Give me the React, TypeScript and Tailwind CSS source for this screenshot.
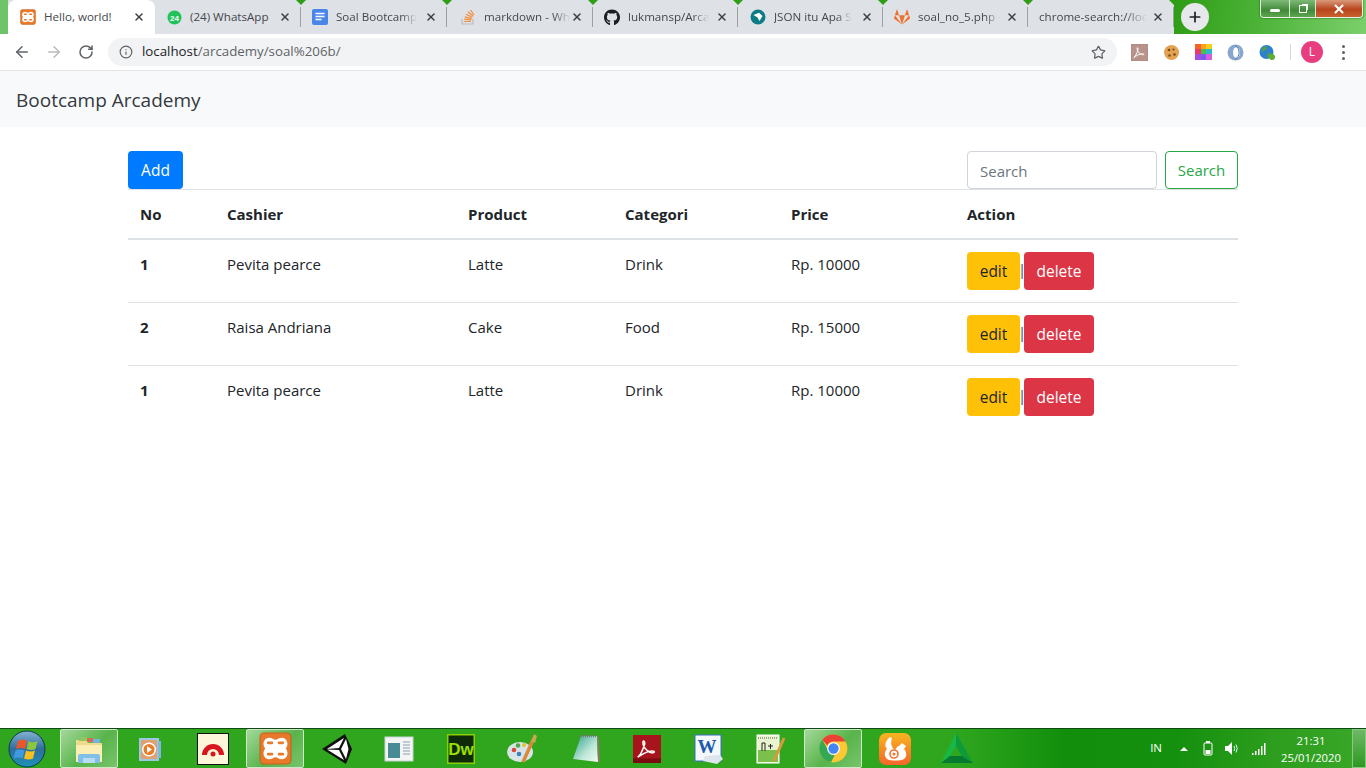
import React from "react";
import { ArrowLeft, ArrowRight, RotateCw, Info, Star, X, Plus } from "lucide-react";
import { FaGithub, FaGitlab } from "react-icons/fa";

const Xampp = ({ s = 16 }: { s?: number }) => (
  <svg width={s} height={s} viewBox="0 0 32 32">
    <rect x="1" y="1" width="30" height="30" rx="4" fill="#e8782a" stroke="#c9601c" />
    <path d="M10 5.500c-5 0-7.500 6-4 10.500-3.500 4.500-1 10.500 4 10.500 3 0 4-2 6-2s3 2 6 2c5 0 7.500-6 4-10.500 3.500-4.500 1-10.500-4-10.500-3 0-4 2-6 2s-3-2-6-2z" fill="#fff" />
    <path d="M9 10.500h3.500M9 21.500h3.500M19.500 10.500H23M19.500 21.500H23" stroke="#e8782a" strokeWidth="2.800" strokeLinecap="round" />
  </svg>
);
const Whats = () => (
  <svg width="15" height="15" viewBox="0 0 15 15"><circle cx="7.500" cy="7.500" r="7" fill="#22c25a" /><text x="7.500" y="10.500" textAnchor="middle" fontSize="8" fontWeight="700" fill="#fff" fontFamily="Liberation Sans">24</text></svg>
);
const Docs = () => (
  <svg width="16" height="16" viewBox="0 0 16 16"><rect width="16" height="16" rx="2" fill="#4a86e8" /><path d="M3.500 4.500h9M3.500 7.500h9M3.500 10.500h6" stroke="#fff" strokeWidth="1.500" /></svg>
);
const Stack = () => (
  <svg width="14" height="16" viewBox="0 0 14 16"><path d="M1 10v5h11v-5" fill="none" stroke="#bbb" strokeWidth="1.200" /><path d="M3 12.500h7M3.200 10.200l7 .7M3.800 7.800l6.800 1.800M5 5.200l6.200 3M7 2.800l5.200 4.400M9.600 1l3.400 5" stroke="#f28c38" strokeWidth="1.200" fill="none" /></svg>
);
const JsonI = () => (
  <svg width="16" height="16" viewBox="0 0 16 16"><circle cx="8" cy="8" r="7.500" fill="#0e7c86" /><path d="M3.500 6 9 3.800 12.500 7 9.500 12 7.500 8.500z" fill="#fff" /></svg>
);
const Acro = ({ c = "#fff" }: { c?: string }) => (
  <path d="M4 19c2-1 4-5 6-11 .5-2-1-4-1.500-2-.5 3 3 8 6.500 9 2 .5 4 0 3-1-1.500-1-7 0-14 5z" fill="none" stroke={c} strokeWidth="1.300" />
);

const tabs = [
  { t: "Hello, world!", i: <Xampp />, w: 147, active: true, left: 12, nofade: true },
  { t: "(24) WhatsApp", i: <Whats />, w: 146, left: 11, nofade: true },
  { t: "Soal Bootcamp", i: <Docs />, w: 146, left: 11 },
  { t: "markdown - Wh", i: <Stack />, w: 146, left: 13 },
  { t: "lukmansp/Arca", i: <FaGithub size={17} color="#1b1f23" />, w: 145, left: 11 },
  { t: "JSON itu Apa S", i: <JsonI />, w: 145, left: 12 },
  { t: "soal_no_5.php ·", i: <FaGitlab size={16} color="#f0702c" />, w: 145, left: 11 },
  { t: "chrome-search://loc", i: null, w: 146, left: 11 },
];

function Tab({ t, i, w, active, left, nofade }: any) {
  return (
    <div style={{ width: w, paddingLeft: left }} className={`relative flex h-full shrink-0 items-center ${active ? "rounded-t-lg bg-white" : ""}`}>
      {i && <span className="mr-2 flex w-4 shrink-0 items-center justify-center">{i}</span>}
      <span className={`whitespace-nowrap text-[11.6px] text-[#45484c] ${nofade ? "" : "[mask-image:linear-gradient(90deg,#000_80%,transparent)]"}`}>{t}</span>
      <X className="absolute right-[10px] top-[11px] text-[#3c4043]" size={12} strokeWidth={3} />
      {!active && <span className="absolute right-0 top-[7px] h-5 w-px bg-[#9aa0a6]" />}
      {!active && <span className="absolute -right-[5px] top-0 h-0 w-0 border-x-[5px] border-t-[5px] border-x-transparent border-t-[#2f9e14]" />}
    </div>
  );
}

function TitleBar() {
  return (
    <div className="relative flex h-[34px] shrink-0 bg-[linear-gradient(100deg,#2c9a12_85%,#4cb338_92%,#7ccf6c_100%)]">
      <div className="w-2 bg-[#6fc46a]" />
      <div className="flex h-full bg-[#dee1e6]">
        {tabs.map((x) => <Tab key={x.t} {...x} />)}
      </div>
      <div className="ml-[7px] mt-[3px] flex h-7 w-7 items-center justify-center rounded-full bg-[#e6e8eb] text-[#202124]"><Plus size={16} strokeWidth={2.600} /></div>
      <div className="absolute right-[3px] top-0 flex h-[18px] w-[103px] overflow-hidden rounded-b border border-t-0 border-[#e8f2e4] shadow-[0_0_2px_#16500c]">
        <div className="flex w-[28px] items-center justify-center bg-[linear-gradient(#7eb978,#3f8a37_60%,#5fa652)]"><span className="mt-1 h-[3px] w-[10px] rounded-sm bg-white" /></div>
        <div className="flex w-[27px] items-center justify-center border-x border-[#dbe9d6] bg-[linear-gradient(#7eb978,#3f8a37_60%,#5fa652)]"><span className="h-2 w-2 border border-white shadow-[2px_-2px_0_-1px_#fff]" /></div>
        <div className="flex flex-1 items-center justify-center bg-[linear-gradient(#d99a7c,#b9441c_55%,#c7622f)] text-white"><X size={14} strokeWidth={3.500} /></div>
      </div>
    </div>
  );
}

function Toolbar() {
  return (
    <div className="flex h-[37px] shrink-0 items-center border-b border-[#e3e4e6] bg-white pl-[13px]">
      <ArrowLeft size={18} strokeWidth={2} className="text-[#5f6368]" />
      <ArrowRight size={18} strokeWidth={2} className="ml-[14px] text-[#b8babd]" />
      <RotateCw size={16} strokeWidth={2.300} className="ml-[15px] text-[#5f6368]" />
      <div className="ml-[14px] flex h-[28px] w-[1009px] items-center rounded-full bg-[#f1f3f4] pl-[11px] pr-[11px] text-[13.3px]">
        <Info size={14} strokeWidth={2} className="text-[#5f6368]" />
        <span className="ml-[9px] text-[#202124]">localhost</span>
        <span className="text-[#5f6368]">/arcademy/soal%206b/</span>
        <Star size={15} strokeWidth={2} className="ml-auto text-[#5f6368]" />
      </div>
      <div className="ml-[14px] flex items-center">
        <svg width="17" height="17" viewBox="0 0 24 24"><rect width="24" height="24" fill="#b8938c" stroke="#a3837c" /><Acro /></svg>
        <svg className="ml-[16px]" width="15" height="15" viewBox="0 0 15 15"><circle cx="7.500" cy="7.500" r="7.500" fill="#e2a252" /><circle cx="5" cy="5" r="1.300" fill="#7a4a1c" /><circle cx="9.500" cy="4.500" r="1.100" fill="#7a4a1c" /><circle cx="10.500" cy="9.500" r="1.300" fill="#7a4a1c" /><circle cx="5.500" cy="10.500" r="1.200" fill="#7a4a1c" /></svg>
        <svg className="ml-[16px]" width="17" height="16" viewBox="0 0 17 16">
          <rect width="6" height="5" fill="#f4632a" /><rect x="6" width="5" height="5" fill="#f7a21a" /><rect x="11" width="6" height="5" fill="#f6cf1e" />
          <rect y="5" width="6" height="5" fill="#e93a6a" /><rect x="6" y="5" width="5" height="5" fill="#45c04a" /><rect x="11" y="5" width="6" height="5" fill="#2fb8c8" />
          <rect y="10" width="6" height="6" fill="#a44ee0" /><rect x="6" y="10" width="5" height="6" fill="#7a58ee" /><rect x="11" y="10" width="6" height="6" fill="#d65ce0" />
        </svg>
        <svg className="ml-[15px]" width="17" height="17" viewBox="0 0 17 17"><circle cx="8.500" cy="8.500" r="8" fill="#8aa6cc" /><ellipse cx="9.500" cy="8.500" rx="3.500" ry="5.500" fill="#fff" /><path d="M8 2c5 1 6 11 0 13" stroke="#4a78b8" fill="none" /></svg>
        <svg className="ml-[15px]" width="17" height="17" viewBox="0 0 17 17"><circle cx="7.500" cy="8" r="7" fill="#2f7fd0" /><path d="M4 3c3-2 5 0 4 2s-4 1-5 4c-1-2 0-5 1-6zM9 9c2-1 4 0 3 2s-3 3-4 2 0-3 1-4z" fill="#4a9f58" /><circle cx="13" cy="13" r="3" fill="#5fae2e" /></svg>
        <span className="ml-[14px] h-[16px] w-px bg-[#d5d7da]" />
        <span className="ml-[10px] flex h-[22px] w-[22px] items-center justify-center rounded-full bg-[#e83e7f] text-[12px] text-white">L</span>
        <span className="ml-[19px] flex flex-col gap-[3px]">
          <i className="h-[3px] w-[3px] rounded-full bg-[#5f6368]" /><i className="h-[3px] w-[3px] rounded-full bg-[#5f6368]" /><i className="h-[3px] w-[3px] rounded-full bg-[#5f6368]" />
        </span>
      </div>
    </div>
  );
}

const rows = [
  ["1", "Pevita pearce", "Latte", "Drink", "Rp. 10000"],
  ["2", "Raisa Andriana", "Cake", "Food", "Rp. 15000"],
  ["1", "Pevita pearce", "Latte", "Drink", "Rp. 10000"],
];
const heads = ["No", "Cashier", "Product", "Categori", "Price", "Action"];
const cw = ["w-[87px]", "w-[241px]", "w-[157px]", "w-[166px]", "w-[176px]", "w-[283px]"];

function Main() {
  return (
    <div className="mx-[128px] mt-[24px] w-[1110px] text-[15px] leading-6 text-[#212529]">
      <div className="flex items-start text-[15.5px]">
        <button className="h-[38px] w-[55px] rounded bg-[#007bff] text-white">Add</button>
        <input placeholder="Search" className="ml-auto h-[38px] w-[190px] rounded border border-[#ced4da] px-3 pt-[1px] text-[15px] placeholder:text-[#6c757d]" />
        <button className="ml-2 h-[38px] w-[73px] rounded border border-[#28a745] text-[15px] text-[#28a745]">Search</button>
      </div>
      <table className="w-full table-fixed border-collapse">
        <colgroup>{cw.map((c) => <col key={c} className={c} />)}</colgroup>
        <thead>
          <tr className="border-t border-b-2 border-t-[#dee2e6] border-b-[#dee2e6]">
            {heads.map((h) => <th key={h} className="h-[49px] px-3 text-left font-bold">{h}</th>)}
          </tr>
        </thead>
        <tbody>
          {rows.map((r, i) => (
            <tr key={i} className={i < 2 ? "border-b border-[#dee2e6]" : ""}>
              <td className="p-3 align-top font-bold">{r[0]}</td>
              {r.slice(1).map((c, j) => <td key={j} className="p-3 align-top">{c}</td>)}
              <td className="p-3 align-top">
                <div className="flex items-center whitespace-nowrap text-[15.5px]">
                  <button className="h-[38px] w-[53px] rounded bg-[#ffc107]">edit</button>
                  <span className="w-[4px] text-center font-['Liberation_Sans',sans-serif] text-[16px] text-[#6b6e70]">|</span>
                  <button className="h-[38px] w-[70px] rounded bg-[#dc3545] text-white">delete</button>
                </div>
              </td>
            </tr>
          ))}
        </tbody>
      </table>
    </div>
  );
}

const TB = ({ children, active }: { children: React.ReactNode; active?: boolean }) => (
  <div className={`flex h-[39px] w-[58px] shrink-0 items-center justify-center ${active ? "rounded-[2px] border border-[#cfe8c8] bg-[linear-gradient(135deg,#a4d89a,#58b44a_55%,#79c46c)]" : ""}`}>{children}</div>
);

function Taskbar() {
  return (
    <div className="flex h-[40px] shrink-0 items-center border-t border-[#0f4a14] bg-[linear-gradient(90deg,#2fa61e_0%,#2fa61e_70%,#128e0c_78%,#158f0e_86%,#2c9d1c_93%,#3aa82a_100%)] pl-[7px] text-white">
      <svg width="40" height="38" viewBox="0 0 40 38" className="shrink-0">
        <defs>
          <linearGradient id="orb" x1="0" y1="0" x2="0" y2="1"><stop offset="0" stopColor="#86b4d4" /><stop offset=".5" stopColor="#2f6c9c" /><stop offset="1" stopColor="#1d93b8" /></linearGradient>
        </defs>
        <circle cx="20" cy="19" r="18" fill="url(#orb)" stroke="#0c3a4a" />
        <path d="M11 11q5-3 9 0l-2 8q-4-2-9 0z" fill="#e8582c" />
        <path d="M21.500 11q4 2.500 9 0l-2 8q-4 2-9 0z" fill="#8cc63f" />
        <path d="M8.500 20.500q5-2 9 0l-2 8q-4-2-9 0z" fill="#3f9ae0" />
        <path d="M19 20.500q4 2 9 0l-2 8q-4 2-9 0z" fill="#f5c020" />
      </svg>
      <div className="ml-[13px] flex items-center gap-[4px]">
        <TB active><svg width="32" height="30" viewBox="0 0 32 30"><path d="M3 6h10l2 3h14v19H3z" fill="#efd98a" /><rect x="6" y="3" width="8" height="4" fill="#8cc860" /><rect x="14" y="4" width="6" height="4" fill="#d86a50" /><rect x="20" y="5" width="7" height="4" fill="#70b4e0" /><path d="M3 11h26v17H3z" fill="#fbeeb4" /><path d="M5 29v-7q0-2 2-2h18q2 0 2 2v7h-5v-5H10v5z" fill="#7ec0e8" /><rect x="10" y="24" width="12" height="5" fill="#b8ddf2" /></svg></TB>
        <TB><svg width="26" height="26" viewBox="0 0 26 26"><rect x="2" y="3" width="18" height="21" fill="#e0a070" stroke="#9cc8e8" strokeWidth="2" /><rect x="20" y="5" width="3" height="17" fill="#7cb8e0" /><circle cx="11" cy="13.500" r="7" fill="#fff" /><circle cx="11" cy="13.500" r="5.500" fill="#e87c28" /><path d="M9 10l5 3.500-5 3.500z" fill="#fff" /></svg></TB>
        <TB><svg width="32" height="32" viewBox="0 0 32 32"><rect x=".5" y=".5" width="31" height="31" fill="#fdf6d8" stroke="#111" /><path d="M5 22a11 11 0 0 1 22 0h-5a6 6 0 0 0-12 0z" fill="#d8141c" /><circle cx="16" cy="21" r="2.500" fill="#d8141c" /></svg></TB>
        <TB active><Xampp s={33} /></TB>
        <TB><svg width="30" height="30" viewBox="0 0 30 30"><path d="M23 0l7 15-6 15L0 15z" fill="#111" /><path d="M5 15L22 4l-5 10zM24 5l2.500 10L24 25l-5-10zM5 15.500l12 .5 5 10z" fill="#fff" /></svg></TB>
        <TB><svg width="30" height="28" viewBox="0 0 30 28"><rect x="1" y="2" width="28" height="24" fill="#f4f4f4" stroke="#c8d4d8" /><rect x="4" y="8" width="12" height="15" fill="#4a8a94" /><path d="M19 7h7M19 10h7M19 13h7M19 16h7M19 19h7" stroke="#8aa0b0" /></svg></TB>
        <TB><svg width="28" height="30" viewBox="0 0 28 30"><rect x=".5" y=".5" width="27" height="29" fill="#0f2a08" stroke="#8cd000" strokeWidth="2" /><text x="14" y="21" textAnchor="middle" fontSize="17" fontWeight="700" fill="#9be000" fontFamily="Liberation Sans">Dw</text></svg></TB>
        <TB><svg width="32" height="32" viewBox="0 0 32 32"><ellipse cx="13" cy="19" rx="13" ry="10" fill="#d8e4e8" /><circle cx="7" cy="17" r="2.300" fill="#d84a3c" /><circle cx="11" cy="12.500" r="2.300" fill="#50a848" /><circle cx="12" cy="21" r="2.300" fill="#3c80b8" /><circle cx="17" cy="12" r="2" fill="#e8c030" /><path d="M16 29L26 7" stroke="#d88a3c" strokeWidth="3.500" /><path d="M24 8l3-7 3 2-2 7z" fill="#c8a850" /></svg></TB>
        <TB><svg width="30" height="30" viewBox="0 0 30 30"><defs><linearGradient id="np" x1="0" y1="0" x2="1" y2="1"><stop offset="0" stopColor="#2f9e8c" /><stop offset=".6" stopColor="#bfe8d8" /><stop offset="1" stopColor="#f4fbf4" /></linearGradient></defs><path d="M11 2h16l1 26-25-3z" fill="url(#np)" /><path d="M28 28l-1-26 2 2 1 24z" fill="#8a7a60" /><path d="M11 2h16" stroke="#777" strokeWidth="2.500" strokeDasharray="1 1" /></svg></TB>
        <TB><svg width="28" height="28" viewBox="0 0 24 24"><rect width="24" height="24" fill="#a8141c" /><rect y="20" width="24" height="4" fill="#7c0c12" /><Acro /></svg></TB>
        <TB><svg width="30" height="32" viewBox="0 0 30 32"><rect x="1" y="2" width="26" height="26" fill="#f4f8fc" stroke="#3870c0" /><path d="M26 22l3 4-6 5-14-3 2-5z" fill="#dce4ec" /><text x="13" y="20" textAnchor="middle" fontSize="19" fontWeight="700" fill="#1e5ab0" fontFamily="Liberation Serif">W</text></svg></TB>
        <TB><svg width="30" height="32" viewBox="0 0 30 32"><rect x="1" y="2" width="22" height="28" fill="#e8f4d0" stroke="#fff" /><rect x="2" y="17" width="20" height="12" fill="#7cc04c" /><path d="M2 5h20" stroke="#555" strokeDasharray="1 1" /><path d="M6 18v-8h3v8M12 13h5M14.500 11v5" stroke="#222" fill="none" /><path d="M18 28L28 5" stroke="#d89a3c" strokeWidth="3" /></svg></TB>
        <TB active><svg width="29" height="29" viewBox="0 0 48 48"><circle cx="24" cy="24" r="23" fill="#fcc934" /><path d="M24 1a23 23 0 0 1 20 11.500H24A11.500 11.500 0 0 0 13.500 19L5.500 9.500A23 23 0 0 1 24 1z" fill="#ea4335" /><path d="M5.500 9.500L15 27a11 11 0 0 0 11 8l-6 11.500A23 23 0 0 1 5.500 9.500z" fill="#34a853" /><circle cx="24" cy="24" r="10.500" fill="#fff" /><circle cx="24" cy="24" r="8.500" fill="#4285f4" /></svg></TB>
        <TB><svg width="32" height="32" viewBox="0 0 32 32"><defs><linearGradient id="uc" x1="0" y1="0" x2="0" y2="1"><stop offset="0" stopColor="#f9b51e" /><stop offset="1" stopColor="#f5652a" /></linearGradient></defs><rect width="32" height="32" rx="7" fill="url(#uc)" /><path d="M11 4c-5 4-6 9-3 12-3 3-3 7 0 10 3 2 14 2 17 0 3-2 3-7 0-10l2-3-4-3-3 3c-2 0-3 3-4 4-3-2-5-6-3-12z" fill="#fff" /><circle cx="15" cy="21" r="4" fill="none" stroke="#f5722a" strokeWidth="1.600" /><circle cx="15" cy="21" r="1.500" fill="#f5722a" /></svg></TB>
        <TB><svg width="32" height="31" viewBox="0 0 32 31"><path d="M15 0L0 30l9-7 6-10z" fill="#18b848" /><path d="M15 0l17 30-11-7-6-10z" fill="#0e9a3c" /><path d="M0 30h32l-11-7H9z" fill="#067a30" /></svg></TB>
      </div>
      <div className="ml-auto flex items-center">
        <span className="mb-[2px] font-['Open_Sans',sans-serif] text-[11.5px]">IN</span>
        <span className="ml-[18px] h-0 w-0 border-x-[4px] border-b-[4px] border-x-transparent border-b-white" />
        <svg className="ml-[15px]" width="10" height="15" viewBox="0 0 10 15"><rect x="3" y="0" width="4" height="2" fill="#fff" /><rect x="1" y="2" width="8" height="12" rx="1" fill="none" stroke="#fff" /><rect x="2.500" y="9" width="5" height="4" fill="#fff" /></svg>
        <svg className="ml-[12px]" width="15" height="13" viewBox="0 0 15 13"><path d="M0 4h3l4-4v13l-4-4H0z" fill="#fff" /><path d="M9 4q1.500 2.500 0 5M11 2.500q2.500 4 0 8" stroke="#dff" fill="none" /></svg>
        <svg className="ml-[11px]" width="16" height="12" viewBox="0 0 16 12"><path d="M1 10h1.500v2H1zM4 8h1.500v4H4zM7 6h1.500v6H7zM10 3h1.500v9H10zM13 0h1.500v12H13z" fill="#fff" /></svg>
        <div className="ml-[15px] mr-[12px] flex w-[58px] flex-col items-center text-[11.3px] leading-[17px]">
          <span>21:31</span>
          <span>25/01/2020</span>
        </div>
        <div className="h-[39px] w-[14px] border border-[#8ac884] bg-[linear-gradient(#6fb866,#2c9a20)]" />
      </div>
    </div>
  );
}

export default function App() {
  return (
    <div className="flex h-[768px] w-[1366px] flex-col overflow-hidden bg-white font-['Open_Sans','Liberation_Sans',sans-serif]">
      <TitleBar />
      <Toolbar />
      <div className="flex h-[56px] shrink-0 items-center bg-[#f8f9fa] pl-4 pt-[2px] text-[19px] text-[#343a40]">Bootcamp Arcademy</div>
      <div className="flex-1"><Main /></div>
      <Taskbar />
    </div>
  );
}
